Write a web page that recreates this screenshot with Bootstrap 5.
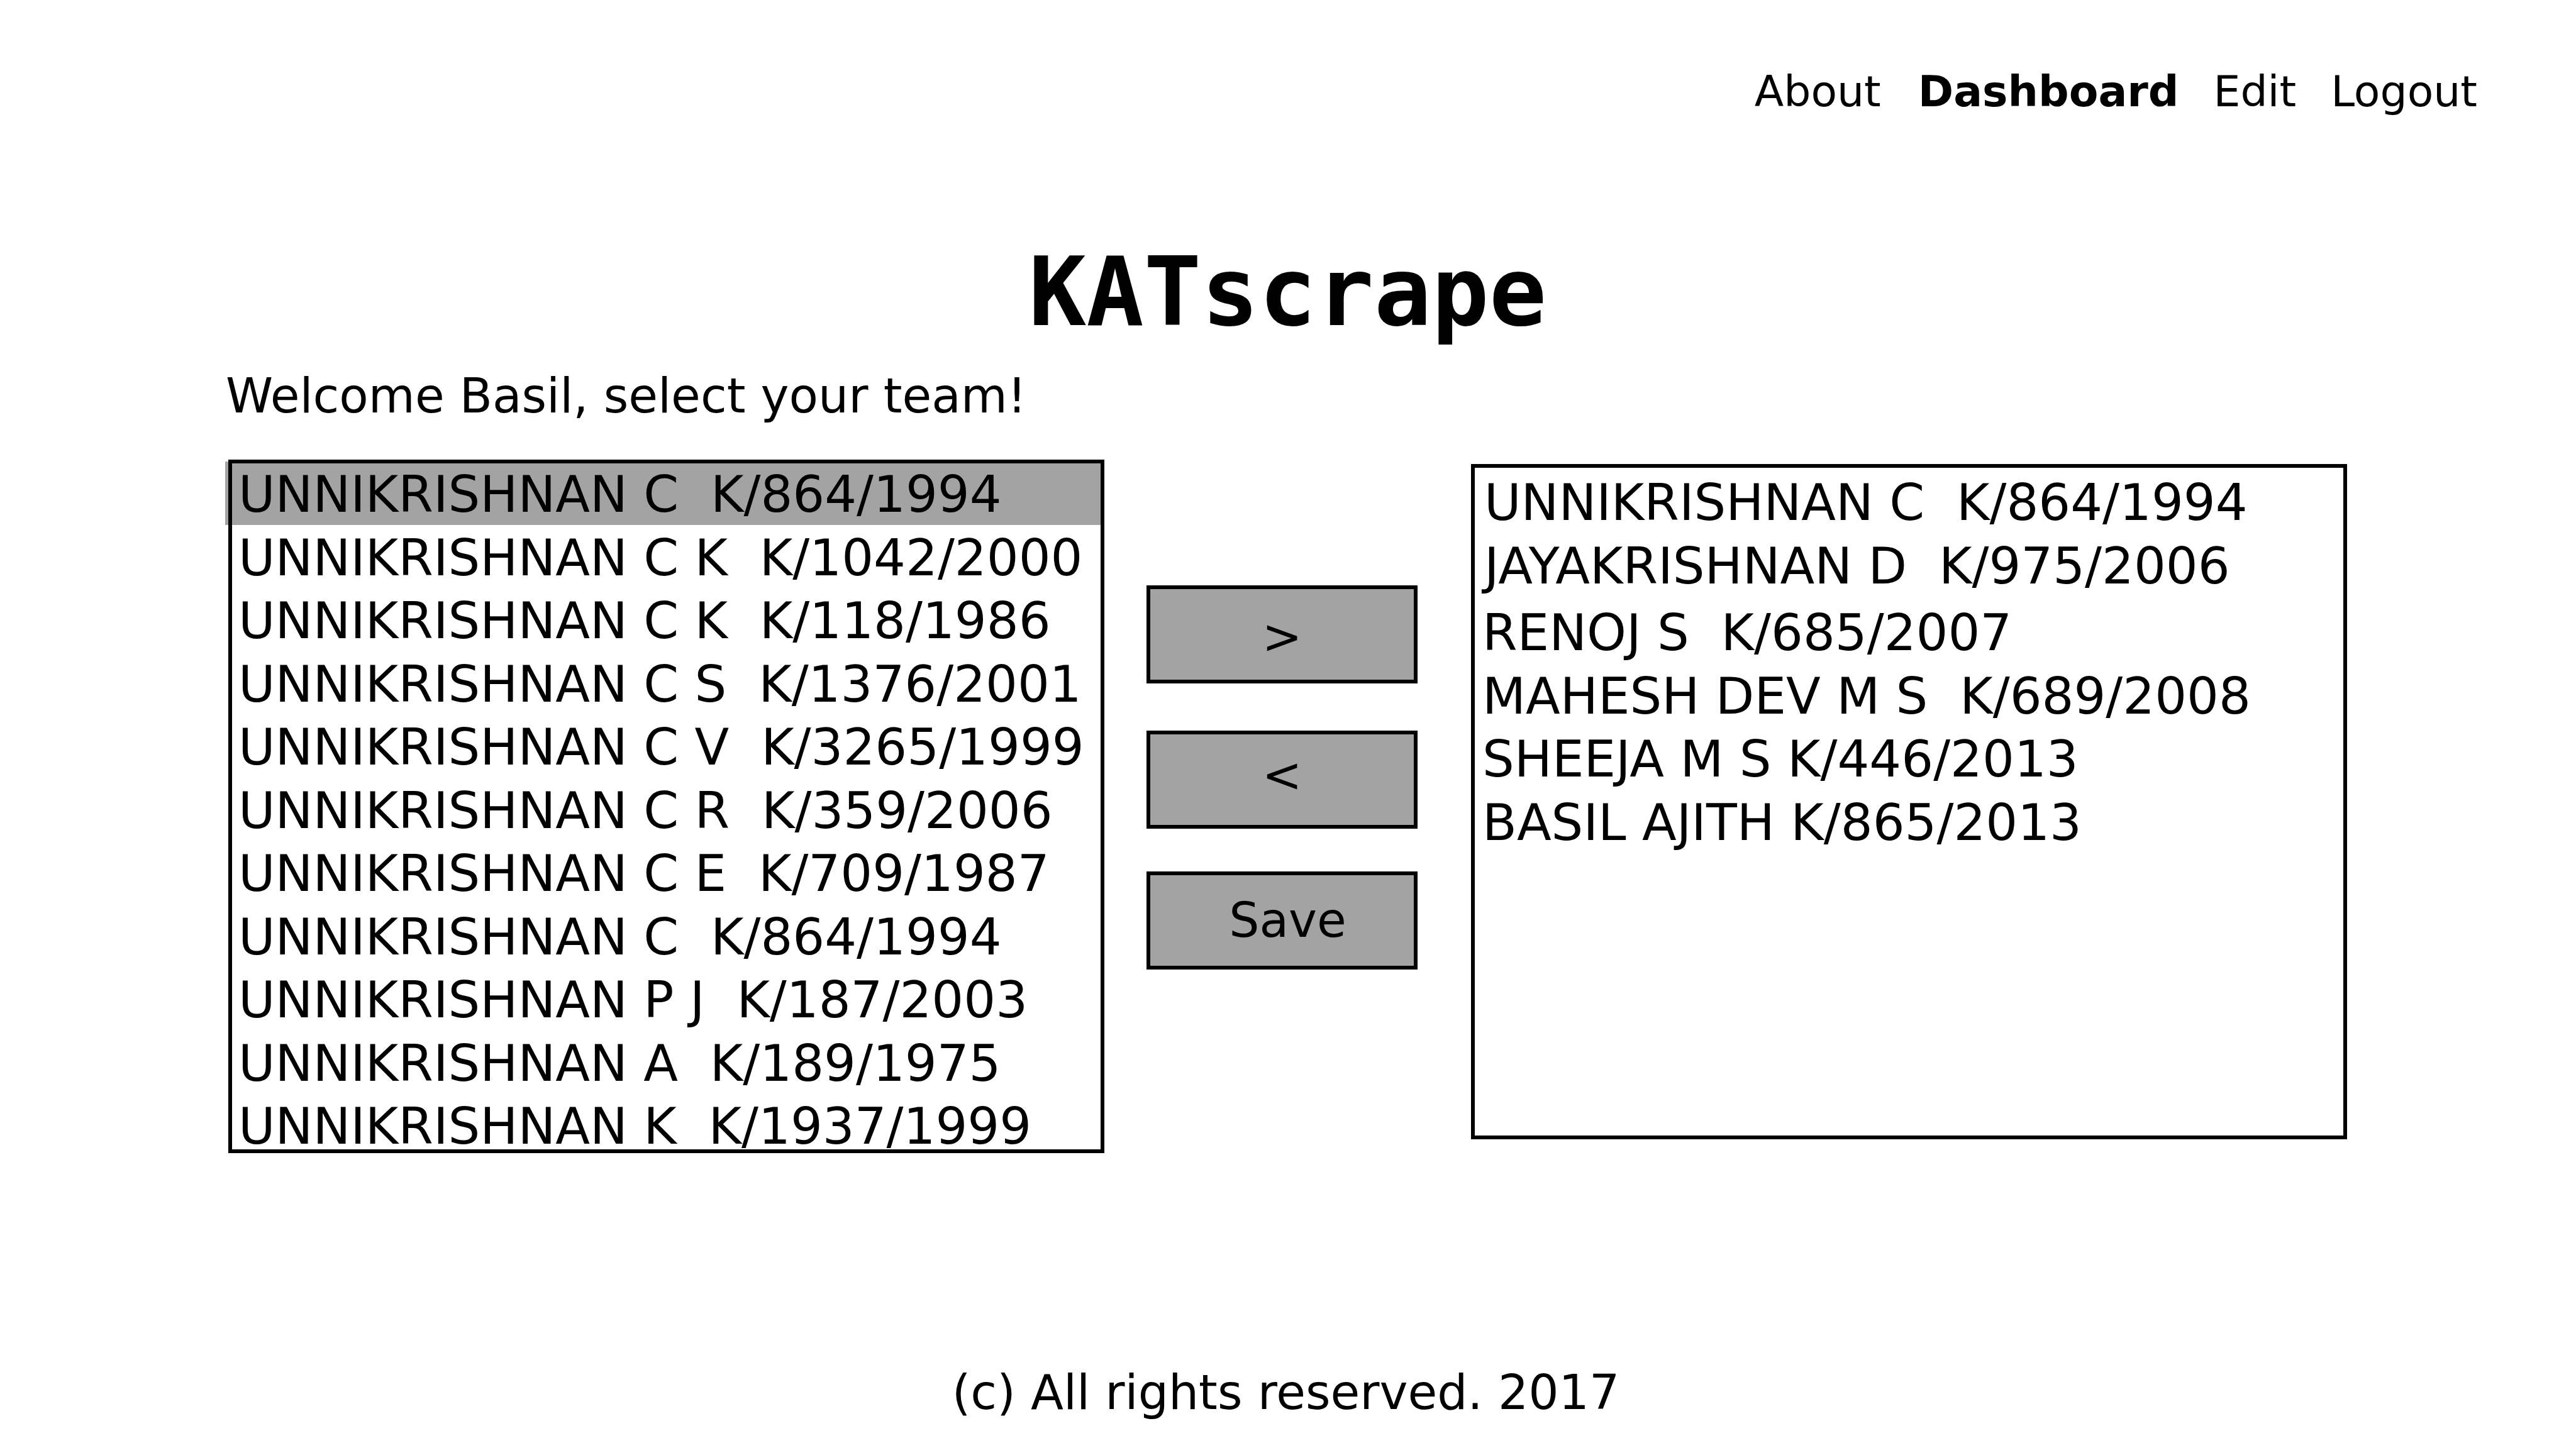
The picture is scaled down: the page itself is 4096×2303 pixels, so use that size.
<!DOCTYPE html>
<html lang="en">
<head>
<meta charset="utf-8">
<meta name="viewport" content="width=device-width, initial-scale=1">
<title>KATscrape</title>
<link rel="stylesheet" href="https://cdn.jsdelivr.net/npm/bootstrap@5.3.0/dist/css/bootstrap.min.css">
<style>
  body { font-family: "DejaVu Sans", sans-serif; color: #000; background: #fff; font-size: 76px; line-height: 90px; }
  .site-head { padding: 106px 157px 0; }
  .site-nav { gap: 55px; font-size: 68px; line-height: 80px; }
  .site-nav .nav-link { padding: 0; color: #000; }
  .brand { font-family: "DejaVu Sans Mono", monospace; font-size: 152px; line-height: 178px; margin: 190px 0 31px; }
  .site-main { padding: 0 364px 0 363px; }
  .welcome { margin: 0 0 56px -4px; }
  .list-wrap { flex: 1 1 0; min-width: 0; }
  .list-wrap.has-pick::before { content: ""; position: absolute; left: -5px; top: 3px; width: 5px; height: 101px; background: #a3a3a3; }
  .pick-list.form-select[multiple] { border: 6px solid #000; border-radius: 0; padding: 0; background: #fff; color: #000; font-family: inherit; font-size: 80px; line-height: normal; overflow: hidden; height: 1103px; scrollbar-width: none; }
  .pick-list option { padding: 3px 0 4px 10px; min-height: 0; color: #000; }
  .pick-list option:nth-child(even) { padding-top: 4px; }
  .pick-list option:checked { color: #000; background: linear-gradient(#a3a3a3, #a3a3a3) 0 0 / 100% 98px no-repeat #fff; }
  .team.pick-list.form-select[multiple] { height: 1074px; padding-top: 6px; }
  .team-wrap { margin-top: 7px; }
  .team.pick-list option { padding-left: 12px; }
  .team.pick-list option.senior { padding-left: 15px; }
  .team.pick-list option.senior + option:not(.senior) { padding-top: 9px; }
  .actions { flex: 0 0 431px; margin: 200px 85px 0 67px; }
  .actions .btn { height: 156px; border: 6px solid #000; border-radius: 0; background: #a3a3a3; color: #000; font-size: inherit; line-height: 90px; padding: 0; }
  .actions .btn-add { padding-top: 8px; margin-bottom: 75px; }
  .actions .btn-drop { padding-bottom: 14px; margin-bottom: 68px; }
  .actions .btn-keep { padding-left: 18px; }
  .site-foot { padding: 0 7px 43px 0; }
</style>
<script src="https://cdn.jsdelivr.net/npm/bootstrap@5.3.0/dist/js/bootstrap.bundle.min.js"></script>
</head>
<body class="d-flex flex-column min-vh-100">
<header class="site-head">
  <nav class="nav site-nav justify-content-end" aria-label="Main">
    <a class="nav-link me-1" href="#">About</a>
    <a class="nav-link fw-bold" href="#" aria-current="page">Dashboard</a>
    <a class="nav-link" href="#">Edit</a>
    <a class="nav-link" href="#">Logout</a>
  </nav>
</header>
<main class="site-main">
  <h1 class="brand text-center fw-bold">KATscrape</h1>
  <label class="welcome d-block" for="people">Welcome Basil, select your team!</label>
  <form class="d-flex align-items-start">
    <div class="list-wrap has-pick position-relative">
      <select class="form-select pick-list" id="people" size="11" multiple>
        <option selected>UNNIKRISHNAN C &nbsp;K/864/1994</option>
        <option>UNNIKRISHNAN C K &nbsp;K/1042/2000</option>
        <option>UNNIKRISHNAN C K &nbsp;K/118/1986</option>
        <option>UNNIKRISHNAN C S &nbsp;K/1376/2001</option>
        <option>UNNIKRISHNAN C V &nbsp;K/3265/1999</option>
        <option>UNNIKRISHNAN C R &nbsp;K/359/2006</option>
        <option>UNNIKRISHNAN C E &nbsp;K/709/1987</option>
        <option>UNNIKRISHNAN C &nbsp;K/864/1994</option>
        <option>UNNIKRISHNAN P J &nbsp;K/187/2003</option>
        <option>UNNIKRISHNAN A &nbsp;K/189/1975</option>
        <option>UNNIKRISHNAN K &nbsp;K/1937/1999</option>
      </select>
    </div>
    <div class="actions d-flex flex-column">
      <button class="btn btn-add" type="button" aria-label="Add to team">&gt;</button>
      <button class="btn btn-drop" type="button" aria-label="Remove from team">&lt;</button>
      <button class="btn btn-keep" type="button">Save</button>
    </div>
    <div class="list-wrap team-wrap">
      <select class="form-select pick-list team" id="team" aria-label="Your team" size="10" multiple>
        <option class="senior">UNNIKRISHNAN C &nbsp;K/864/1994</option>
        <option class="senior">JAYAKRISHNAN D &nbsp;K/975/2006</option>
        <option>RENOJ S &nbsp;K/685/2007</option>
        <option>MAHESH DEV M S &nbsp;K/689/2008</option>
        <option>SHEEJA M S K/446/2013</option>
        <option>BASIL AJITH K/865/2013</option>
      </select>
    </div>
  </form>
</main>
<footer class="site-foot mt-auto text-center">(c) All rights reserved. 2017</footer>
</body>
</html>
